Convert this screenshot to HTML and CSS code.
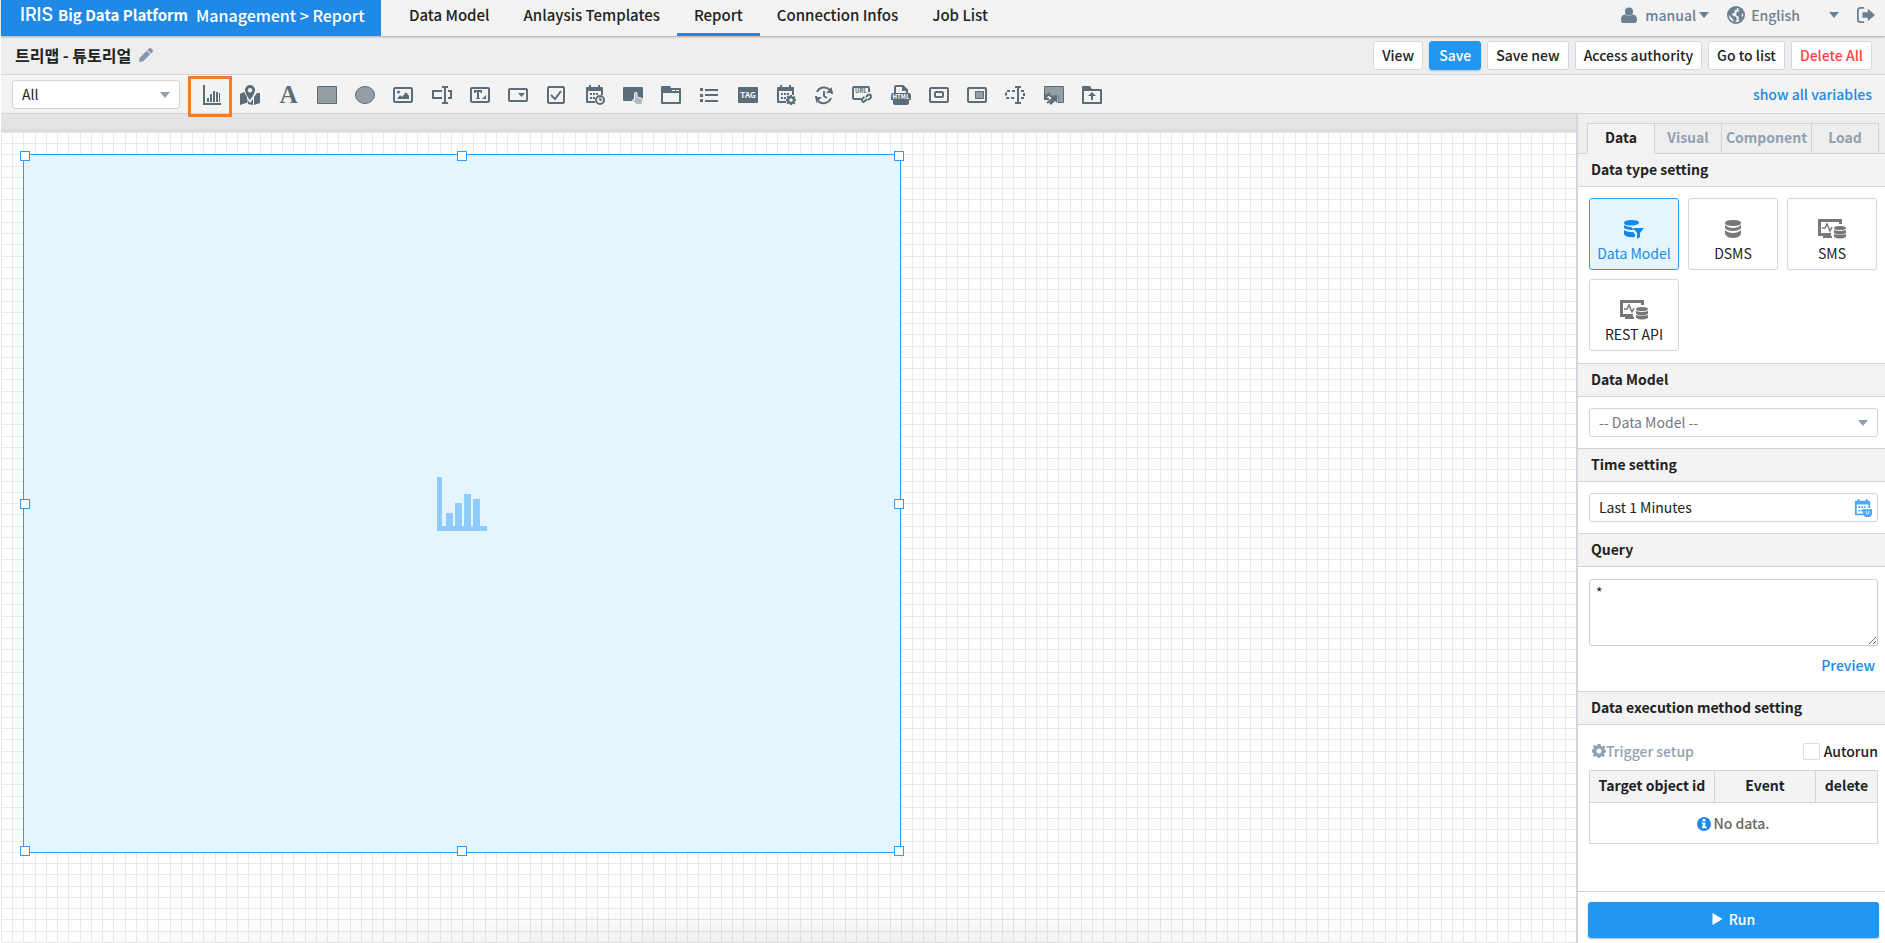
FILE: index.html
```html
<!DOCTYPE html>
<html lang="en">
<head>
<meta charset="utf-8">
<title>IRIS Big Data Platform - Report</title>
<link rel="stylesheet" href="styles.css">
</head>
<body>
<svg class="defs" width="0" height="0" aria-hidden="true">
  <symbol id="chart" viewBox="0 0 20 20"><path d="M1 0h2v18h16v2H1zM5 13h2v4H5zM8 9h2v8H8zM11 6h2v11h-2zM14 7h2v10h-2zM17 8h1v9h-1z"/></symbol>
  <symbol id="bigchart" viewBox="0 0 50 54"><path d="M0 0h5v49h45v5H0zM9 36h7v13H9zM18 26h7v23h-7zM27 17h7v32h-7zM36 22h7v27h-7z"/></symbol>
  <symbol id="map" viewBox="0 0 20 20"><path d="M0 9l4-2 3 5v6l-1 0-6 2zM7 14l3 4 3-4v6l-5-1zM14 12l3-4 3 0v10l-6 2z"/><path fill-rule="evenodd" d="M10 0a5 5 0 0 1 5 5c0 4-5 10-5 10S5 9 5 5a5 5 0 0 1 5-5zm0 3a2.300 2.300 0 1 0 .01 0z"/></symbol>
  <symbol id="square" viewBox="0 0 20 20"><path class="soft" stroke="currentColor" d="M.5 1.500h19v17H.5z"/></symbol>
  <symbol id="circle" viewBox="0 0 20 20"><ellipse class="soft" stroke="currentColor" cx="10" cy="10" rx="9.500" ry="8.500"/></symbol>
  <symbol id="image" viewBox="0 0 20 20"><rect class="line" x="1" y="3" width="18" height="14" rx="1"/><path d="M4 14l3-4 2 2 4-5 3 4v3z"/><circle cx="5.500" cy="7" r="1.500"/></symbol>
  <symbol id="input" viewBox="0 0 20 20"><path class="line" d="M10 6H1v7h9M16 6h3v7h-3M13 2v16M10 2h6M10 18h6"/></symbol>
  <symbol id="textarea" viewBox="0 0 20 20"><rect class="line" x="1" y="3" width="18" height="14" rx="1"/><path d="M4 5h8v3h-1l-1-1H9v6h1v1H6v-1h1V7H6L5 8H4zM16 10v4h-4z"/></symbol>
  <symbol id="combo" viewBox="0 0 20 20"><rect class="line" x="1" y="4" width="18" height="12" rx="1"/><path d="M10 8h7l-3.500 4z"/></symbol>
  <symbol id="check" viewBox="0 0 20 20"><rect class="line" x="2" y="2" width="16" height="16" rx="1"/><path class="line" d="M5 10l4 4 6-8"/></symbol>
  <symbol id="calendar" viewBox="0 0 20 20"><path d="M2 2h2V0h2v2h7V0h2v2h2q1 0 1 1v7h-2V6H3v10h7v2H2q-1 0-1-1V3q0-1 1-1z"/><path d="M5 8h2v2H5zM8 8h2v2H8zM11 8h2v2h-2zM5 12h2v2H5zM8 12h2v2H8z"/></symbol>
  <symbol id="caltime" viewBox="0 0 20 20"><use href="#calendar"/><circle class="cut" cx="15" cy="15" r="4"/><path class="thin" d="M15 12.500V15h2"/></symbol>
  <symbol id="calshield" viewBox="0 0 20 20"><use href="#calendar"/><path d="M10 11q5 1 10 0v5q0 4-5 4t-5-4z"/><path fill="none" stroke="#fff" d="M13.500 13v3q1.500 2 3 0v-3"/></symbol>
  <symbol id="gear" viewBox="0 0 20 20"><path fill-rule="evenodd" d="M8 0h4l.6 2.800 1.600.7L16.600 2 19 4.400l-1.500 2.400.7 1.600L20 9v3l-2.300.6-.7 1.600 1.500 2.300-2.400 2.300-2.300-1.500-1.500.6L12 20H8l-.6-2.100-1.600-.7L3.500 18.600 1 16.300l1.500-2.300-.7-1.600L0 12V8l2.100-.6.7-1.600L1.400 3.500 3.600 1.200l2.300 1.500 1.600-.6zM10 6.500a3.500 3.500 0 1 0 .01 0z"/></symbol>
  <symbol id="calgear" viewBox="0 0 20 20"><use href="#calendar"/><circle class="halo" cx="15" cy="15" r="5"/><use href="#gear" x="10" y="10" width="10" height="10"/></symbol>
  <symbol id="click" viewBox="0 0 20 20"><path d="M1 2h18q1 0 1 1v12q0 1-1 1H1q-1 0-1-1V3q0-1 1-1z"/><path d="M11.500 8q1.500-2 2.500 0v4l4 1q2 0 1.500 3l-1 3.500h-5L9.500 15q1-1.500 2 0z" fill="#b3babf" stroke="#f3f3f3"/></symbol>
  <symbol id="folder" viewBox="0 0 20 20"><path fill-rule="evenodd" d="M1 1h8l1 2h9q1 0 1 1v14q0 1-1 1H1q-1 0-1-1V2q0-1 1-1zm1 7v9h16V8zm9-3v1h3V5zm4 0v1h3V5z"/></symbol>
  <symbol id="list" viewBox="0 0 20 20"><path d="M1 3h3v3H1zM6 4h13v2H6zM1 9h3v3H1zM6 9h13v2H6zM1 14h3v3H1zM6 15h13v2H6z"/></symbol>
  <symbol id="tag" viewBox="0 0 20 20"><rect y="2" width="20" height="16" rx="1"/><text class="tiny" x="10" y="13" font-size="8">TAG</text></symbol>
  <symbol id="refresh" viewBox="0 0 20 20"><path class="line" d="M3 7a8 8 0 0 1 13-2M2 11a8 8 0 0 0 1 4M17 13a8 8 0 0 1-13 3M18 9a8 8 0 0 0-1-4M10 6v5l3 2"/><path d="M18 2v6h-6zM2 18v-6h6z"/></symbol>
  <symbol id="url" viewBox="0 0 20 20"><path class="line" d="M9 14H2q-1 0-1-1V3q0-1 1-1h14q1 0 1 1v4"/><text class="small" x="9" y="8" font-size="6">URL</text><path class="line" d="M14 12l2-2q1-1 2.500 0 1 1.500 0 3l-2.500 2M15 14l-2 2q-1 1.500-2.500.5-1-1.500 0-3l2-1.500"/></symbol>
  <symbol id="html" viewBox="0 0 20 20"><path class="line" d="M4 8V2q0-1 1-1h7l4 4v3M12 1v4h4"/><path d="M2 8h16q2 0 2 3v4h-2v3q0 2-2 2H4q-2 0-2-2v-3H0v-4q0-3 2-3z"/><text class="tiny" x="10" y="14" font-size="6">HTML</text></symbol>
  <symbol id="panel" viewBox="0 0 20 20"><rect class="line" x="1" y="3" width="18" height="14" rx="1"/><rect class="line" x="6" y="7" width="8" height="5" rx="1"/></symbol>
  <symbol id="side" viewBox="0 0 20 20"><rect class="line" x="1" y="3" width="18" height="14" rx="1"/><path class="soft" stroke="currentColor" d="M8.500 6.500h8v7h-8z"/></symbol>
  <symbol id="dashinput" viewBox="0 0 20 20"><path class="line" stroke-dasharray="3 2" d="M10 6H2L1 7v5l1 1h8M16 6h3v7h-3"/><path class="line" d="M13 2v16M10 2h6M10 18h6"/></symbol>
  <symbol id="link" viewBox="0 0 20 20"><path class="soft" stroke="currentColor" d="M.5 9V1.500h19v16H14V11H7z"/><path class="line" d="M1 13l5-5M3 18l9-7M1 9v5h4"/><path d="M5 11h8v7l-2-2-4 4-2-2 4-4z"/></symbol>
  <symbol id="upload" viewBox="0 0 20 20"><path fill-rule="evenodd" d="M1 1h7l2 3h9q1 0 1 1v13q0 1-1 1H1q-1 0-1-1V2q0-1 1-1zm1 5v11h16V6z"/><path d="M10 7l4 4h-3v4H9v-4H6z"/></symbol>
  <symbol id="pencil" viewBox="0 0 20 20"><path d="M14 1q2-2 4 0l1 1q2 2 0 4l-2 2-5-5zM11 4l5 5L6 19l-6 1 1-6z"/></symbol>
  <symbol id="user" viewBox="0 0 20 20"><circle cx="10" cy="5.500" r="5"/><path d="M5 9q5 4 10 0 5 1 5 7 0 4-3 4H3q-3 0-3-4 0-6 5-7z"/></symbol>
  <symbol id="globe" viewBox="0 0 20 20"><circle class="line" cx="10" cy="10" r="9"/><path d="M2 5l4-4 5 0 0 3-3 1 1 2-4 2 2 2 3 1 1 3-3 5-1-5-3-3-3-3zM12 3l5 0 2 6-2-1-1 3 2 1-3 5-2-1 0-4-3-2 1-4 3 0z"/></symbol>
  <symbol id="exit" viewBox="0 0 20 20"><path class="line" d="M8 2H4Q1 2 1 5v10q0 3 3 3h4"/><path d="M6 7h6V3l8 7-8 7v-4H6z"/></symbol>
  <symbol id="caret" viewBox="0 0 10 6"><path d="M0 0h10L5 6z"/></symbol>
  <symbol id="disks" viewBox="0 0 20 20"><path d="M2 4q0-3 8-3t8 3-8 3-8-3zM2 6q3 3 8 3t8-3v3q-2 3-8 3t-8-3zM2 11q3 3 8 3t8-3v4q-2 4-8 4t-8-4z"/></symbol>
  <symbol id="dbfilter" viewBox="0 0 20 20"><path d="M0 3.500Q0 1 7.500 1T15 3.500 7.500 6.500 0 3.500zM0 6q3 2 7 2l3 3q-7 0-10-2zM0 11q3 2 9 2v0l2 2v3Q2 19 0 15z"/><path d="M9 9h11l-4 5v4l-3 2v-6z"/></symbol>
  <symbol id="monitor" viewBox="0 0 28 20"><path d="M0 0h24v5h-3V3H3v11h10v3h1v2H5v-2H0z"/><path class="thin" d="M4 9h3l2-4 3 7 2-4"/><path d="M16 9q0-2 6-2t6 2-6 2-6-2zM16 11q6 2 12 0v3q-6 3-12 0zM16 15q6 2 12 0v3q-6 3-12 0z"/></symbol>
  <symbol id="info" viewBox="0 0 20 20"><circle cx="10" cy="10" r="10"/><path fill="#fff" d="M8 3h4v3H8zM7 8h5v6h2v2H7v-2h1v-4H7z"/></symbol>
</svg>

<header class="topbar">
  <div class="brand"><span class="logo">IRIS</span><span class="platform">Big Data Platform</span><span class="crumb">Management &gt; Report</span></div>
  <nav class="nav">
    <a href="#">Data Model</a><a href="#">Anlaysis Templates</a><a href="#" class="current">Report</a><a href="#">Connection Infos</a><a href="#">Job List</a>
  </nav>
  <div class="account">
    <button class="plain"><svg class="i16"><use href="#user"/></svg><span class="name">manual</span><svg class="caret"><use href="#caret"/></svg></button>
    <button class="plain lang"><svg class="i18"><use href="#globe"/></svg><span>English</span><svg class="caret"><use href="#caret"/></svg></button>
    <button class="plain" aria-label="Log out"><svg class="i18"><use href="#exit"/></svg></button>
  </div>
</header>

<section class="titlebar">
  <h1>트리맵 - 튜토리얼</h1>
  <button class="plain edit" aria-label="Rename"><svg><use href="#pencil"/></svg></button>
  <div class="actions">
    <button>View</button><button class="primary">Save</button><button>Save new</button><button>Access authority</button><button>Go to list</button><button class="danger">Delete All</button>
  </div>
</section>

<section class="toolbar">
  <div class="select filter"><select aria-label="Object filter"><option>All</option></select><svg class="caret"><use href="#caret"/></svg></div>
  <div class="tools">
    <button class="picked" aria-label="Chart"><svg><use href="#chart"/></svg></button>
    <button aria-label="Map"><svg><use href="#map"/></svg></button>
    <button class="letter" aria-label="Text">A</button>
    <button aria-label="Rectangle"><svg><use href="#square"/></svg></button>
    <button aria-label="Ellipse"><svg><use href="#circle"/></svg></button>
    <button aria-label="Image"><svg><use href="#image"/></svg></button>
    <button aria-label="Input"><svg><use href="#input"/></svg></button>
    <button aria-label="Text area"><svg><use href="#textarea"/></svg></button>
    <button aria-label="Combo box"><svg><use href="#combo"/></svg></button>
    <button aria-label="Check box"><svg><use href="#check"/></svg></button>
    <button aria-label="Date and time"><svg><use href="#caltime"/></svg></button>
    <button aria-label="Button"><svg><use href="#click"/></svg></button>
    <button aria-label="Tab"><svg><use href="#folder"/></svg></button>
    <button aria-label="List"><svg><use href="#list"/></svg></button>
    <button aria-label="Tag"><svg><use href="#tag"/></svg></button>
    <button aria-label="Date setting"><svg><use href="#calgear"/></svg></button>
    <button aria-label="Refresh timer"><svg><use href="#refresh"/></svg></button>
    <button aria-label="URL"><svg><use href="#url"/></svg></button>
    <button aria-label="HTML"><svg><use href="#html"/></svg></button>
    <button aria-label="Popup"><svg><use href="#panel"/></svg></button>
    <button aria-label="Side panel"><svg><use href="#side"/></svg></button>
    <button aria-label="Variable"><svg><use href="#dashinput"/></svg></button>
    <button aria-label="Shortcut"><svg><use href="#link"/></svg></button>
    <button aria-label="Upload"><svg><use href="#upload"/></svg></button>
  </div>
  <a class="variables" href="#">show all variables</a>
</section>

<div class="workspace">
  <main class="stage">
    <div class="canvas">
      <div class="object">
        <svg class="placeholder"><use href="#bigchart"/></svg>
        <i class="h nw"></i><i class="h n"></i><i class="h ne"></i><i class="h w"></i><i class="h e"></i><i class="h sw"></i><i class="h s"></i><i class="h se"></i>
      </div>
    </div>
  </main>

  <aside class="panel">
    <div class="tabs"><button class="on">Data</button><button>Visual</button><button class="wide">Component</button><button>Load</button></div>
    <h2 class="first">Data type setting</h2>
    <div class="types">
      <button class="on"><svg><use href="#dbfilter"/></svg>Data Model</button>
      <button><svg><use href="#disks"/></svg>DSMS</button>
      <button><svg class="mon"><use href="#monitor"/></svg>SMS</button>
      <button><svg class="mon"><use href="#monitor"/></svg>REST API</button>
    </div>
    <h2>Data Model</h2>
    <div class="body"><div class="select"><select class="muted" aria-label="Data Model"><option>-- Data Model --</option></select><svg class="caret"><use href="#caret"/></svg></div></div>
    <h2>Time setting</h2>
    <div class="body"><div class="select"><input type="text" aria-label="Time setting" value="Last 1 Minutes"><svg class="when"><use href="#calshield"/></svg></div></div>
    <h2>Query</h2>
    <div class="body query"><textarea aria-label="Query">*</textarea><a href="#">Preview</a></div>
    <h2>Data execution method setting</h2>
    <div class="body run-method">
      <div class="trigger"><button class="plain"><svg><use href="#gear"/></svg>Trigger setup</button><label><input type="checkbox">Autorun</label></div>
      <table>
        <thead><tr><th class="c1">Target object id</th><th>Event</th><th class="c3">delete</th></tr></thead>
        <tbody><tr><td colspan="3"><svg><use href="#info"/></svg>No data.</td></tr></tbody>
      </table>
    </div>
    <div class="footer"><button><svg viewBox="0 0 10 12"><path d="M0 0l10 6-10 6z"/></svg>Run</button></div>
  </aside>
</div>
</body>
</html>
```

FILE: styles.css
```css
*, *::after { box-sizing: border-box; }
html, body { height: 100%; }
body {
  margin: 0;
  padding-left: 1px;
  display: flex;
  flex-direction: column;
  overflow: hidden;
  background: #fff;
  color: #222;
  font: 14px/20px "Noto Sans CJK KR", sans-serif;
}
button, input, select, textarea { font: inherit; color: inherit; margin: 0; }
button { cursor: pointer; padding: 0; }
a { text-decoration: none; }
svg { fill: currentColor; flex: none; }
.defs { display: none; }
.line { fill: none; stroke: currentColor; stroke-width: 2; }
.thin { fill: none; stroke: currentColor; stroke-width: 1.5; }
.soft { fill: #969ea5; }
.cut { fill: #f3f3f3; stroke: currentColor; stroke-width: 2; }
.halo { fill: #f3f3f3; }
.tiny { fill: #fff; font-weight: 700; text-anchor: middle; }
.small { font-weight: 700; text-anchor: middle; }
.caret { width: 10px; height: 6px; }
.i16 { width: 16px; height: 18px; }
.i18 { width: 18px; height: 18px; }
.plain { display: flex; align-items: center; border: 0; background: none; }

.topbar {
  flex: none;
  display: flex;
  height: 36px;
  background: #f3f3f3;
  box-shadow: 0 1px 2px #0000004d;
  position: relative;
  font-weight: 500;
}
.brand {
  display: flex;
  align-items: center;
  width: 380px;
  padding: 0 0 7px 19px;
  background: #2089e6;
  color: #fff;
  font-size: 16px;
}
.logo { width: 38px; font: 500 18px/24px Inter, sans-serif; }
.platform { width: 138px; font-size: 15px; font-weight: 700; white-space: nowrap; }
.nav { display: flex; padding-left: 11px; font-size: 15px; }
.nav a {
  display: flex;
  align-items: center;
  padding: 0 17px 4px;
  color: #222;
  border-bottom: 3px solid transparent;
}
.nav .current { border-color: #2089e6; }
.account {
  display: flex;
  align-items: center;
  gap: 18px;
  margin-left: auto;
  padding: 0 10px 6px 0;
  color: #6a8093;
}
.name { margin-left: 8px; }
.account .plain .name + .caret { margin-left: 3px; }
.lang span { margin: 0 29px 0 6px; }

.titlebar {
  flex: none;
  display: flex;
  align-items: center;
  height: 39px;
  padding: 0 13px 0 14px;
  background: #eee;
  border-bottom: 1px solid #d0d5de;
}
h1 { margin: 0; font-size: 16px; line-height: 20px; font-weight: 700; }
.edit { margin-left: 8px; color: #8497ad; }
.edit svg { width: 14px; height: 14px; }
.actions { display: flex; gap: 6px; margin-left: auto; }
.actions button {
  height: 29px;
  padding: 0 8px;
  border: 1px solid #d5d8e0;
  border-radius: 3px;
  background: #fff;
  font-weight: 500;
}
.actions .primary { padding: 0 9px; background: #2196f3; border-color: #2196f3; color: #fff; box-shadow: 0 1px 2px #0003; }
.actions .danger { color: #ff4343; }

.toolbar {
  flex: none;
  display: flex;
  align-items: center;
  height: 39px;
  padding: 0 13px 0 11px;
  background: #f3f3f3;
  border-bottom: 1px solid #d0d5de;
}
.select { position: relative; display: flex; }
.select select, .select input {
  appearance: none;
  width: 100%;
  height: 29px;
  padding: 0 9px;
  border: 1px solid #ccd3da;
  border-radius: 3px;
  background: #fff;
}
.select .caret { position: absolute; right: 10px; top: 12px; color: #8aa0b3; }
.filter { width: 168px; }
.tools { display: grid; grid-template-columns: repeat(24, 1fr); width: 918px; margin-left: 13px; color: #5b6d78; }
.tools button {
  position: relative;
  display: flex;
  align-items: center;
  justify-content: center;
  height: 38px;
  padding-top: 2px;
  border: 0;
  background: none;
  color: inherit;
}
.tools svg { width: 20px; height: 20px; }
.tools .letter { font: 700 25px/30px "Liberation Serif", serif; }
.picked::after {
  content: "";
  position: absolute;
  left: -5px;
  top: 1px;
  width: 44px;
  height: 41px;
  border: 3px solid #ed7d31;
  z-index: 2;
}
.variables { margin-left: auto; color: #2089e6; font-weight: 500; }

.workspace { flex: 1; display: flex; min-height: 0; }
.stage { flex: 1; display: flex; padding-top: 18px; background: linear-gradient(#e6e6e6, #e2e2e2 14px, #dadada 18px); }
.canvas {
  --line: #e9e9e9;
  flex: 1;
  padding: 22px;
  background:
    radial-gradient(ellipse at 50% 100%, #00000010, transparent 70%) bottom / 100% 40px no-repeat,
    linear-gradient(90deg, var(--line) 1px, transparent 1px 11px, var(--line) 11px 12px, transparent 12px 22px, var(--line) 22px 23px, transparent 23px 34px, var(--line) 34px 35px, transparent 35px) 0 0 / 45px 45px,
    linear-gradient(var(--line) 1px, transparent 1px 11px, var(--line) 11px 12px, transparent 12px 22px, var(--line) 22px 23px, transparent 23px 34px, var(--line) 34px 35px, transparent 35px) 0 0 / 45px 45px,
    #fff;
}
.object {
  position: relative;
  display: flex;
  align-items: center;
  justify-content: center;
  width: 878px;
  height: 699px;
  border: 1px solid #2f9bf3;
  background: #e4f5fe;
}
.placeholder { width: 50px; height: 54px; color: #90cbff; }
.h { position: absolute; width: 10px; height: 10px; border: 1px solid #2f9bf3; background: #fff; }
.nw, .n, .ne { top: -4px; }
.sw, .s, .se { bottom: -4px; }
.w, .e { top: 50%; margin-top: -5px; }
.nw, .w, .sw { left: -4px; }
.ne, .e, .se { right: -4px; }
.n, .s { left: 50%; margin-left: -5px; }

.panel { width: 309px; display: flex; flex-direction: column; border-left: 2px solid #d3d7dd; background: #fff; }
.tabs { display: flex; padding: 9px 6px 0 9px; background: linear-gradient(#d0d3d8, #d0d3d8) bottom / 100% 1px no-repeat, #eee; }
.tabs button {
  flex: 1;
  height: 31px;
  padding-bottom: 3px;
  border: 1px solid #cfd3d8;
  border-left-width: 0;
  background: #eee;
  color: #8ea2b3;
  font-weight: 700;
}
.tabs .wide { flex: none; width: 90px; }
.tabs .on { border-left-width: 1px; border-bottom-color: #f3f3f3; background: #f3f3f3; color: #222; }
h2 {
  margin: 0;
  height: 34px;
  padding: 5px 13px;
  font-size: 14px;
  line-height: 20px;
  font-weight: 700;
  background: #f3f3f3;
  border: 1px solid #d0d5da;
  border-width: 1px 0;
}
h2.first { height: 33px; border-top: 0; }
.types { display: grid; grid-template-columns: repeat(3, 1fr); gap: 9px; padding: 11px 8px 12px 11px; }
.types button {
  display: flex;
  flex-direction: column;
  align-items: center;
  gap: 4px;
  height: 72px;
  padding-top: 20px;
  border: 1px solid #d0d5de;
  border-radius: 3px;
  background: #fff;
}
.types svg { width: 20px; height: 20px; color: #777; }
.types .mon { width: 28px; }
.types .on { background: #e4f5fe; border-color: #2f9bf3; color: #2089e6; }
.types .on svg { color: #1189ee; }
.body { padding: 11px 7px 11px 11px; }
.body select, .body input[type="text"] { padding-bottom: 2px; }
.select .muted { color: #777; }
.select .when { position: absolute; right: 6px; top: 6px; width: 18px; height: 18px; color: #52a5f5; }
.query { padding-top: 12px; padding-bottom: 16px; display: flex; flex-direction: column; }
textarea { height: 67px; padding: 2px 6px; border: 1px solid #c6d0da; border-radius: 3px; resize: vertical; line-height: 20px; }
.query a { align-self: flex-end; margin: 9px 3px 0 0; color: #2089e6; font-weight: 500; }
.trigger { display: flex; justify-content: space-between; align-items: center; height: 30px; margin-bottom: 4px; font-weight: 500; }
.trigger button { color: #8ea2b3; padding-left: 3px; }
.trigger svg { width: 14px; height: 14px; }
.trigger label { display: flex; align-items: center; gap: 4px; }
.trigger input { appearance: none; width: 17px; height: 17px; border: 1px solid #d8dde4; border-radius: 2px; background: #fff; }
table { width: 100%; border-collapse: collapse; table-layout: fixed; }
th, td { border: 1px solid #cfd5db; padding: 0; }
th { height: 32px; padding-bottom: 4px; background: #f3f3f3; font-weight: 700; }
td { height: 41px; text-align: center; color: #666; font-weight: 500; }
td svg { width: 14px; height: 14px; margin-right: 2px; color: #2089e6; vertical-align: -2px; }
.c1 { width: 125px; }
.c3 { width: 62px; }
.footer { margin-top: auto; padding: 10px 6px 5px 10px; border-top: 1px solid #ccd3d9; }
.footer button {
  display: flex;
  align-items: center;
  justify-content: center;
  gap: 6px;
  width: 100%;
  height: 36px;
  padding-bottom: 3px;
  border: 0;
  border-radius: 3px;
  background: #2196f3;
  box-shadow: 0 1px 2px #0004;
  color: #fff;
  font-weight: 500;
}
.footer svg { width: 11px; height: 12px; }
```
